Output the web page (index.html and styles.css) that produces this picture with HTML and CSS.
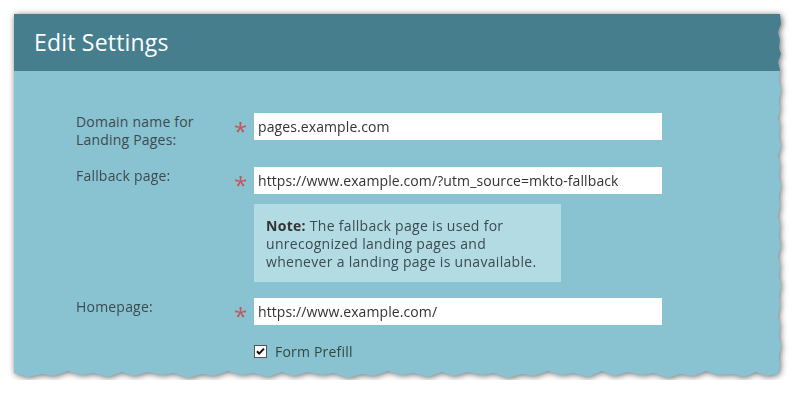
FILE: index.html
```html
<!DOCTYPE html>
<html lang="en">
<head>
    <meta charset="UTF-8">
    <title>Edit Settings</title>
    <link rel="stylesheet" href="styles.css">
</head>
<body>

    <div class="sheet">
        <div class="panel">
            <div class="panel-header">
                <h2>Edit Settings</h2>
            </div>

            <div class="panel-body">
                <div class="field">
                    <label class="field-label" for="domain">Domain name for<br>Landing Pages:</label>
                    <span class="required">*</span>
                    <input type="text" id="domain" class="field-input" value="pages.example.com">
                </div>

                <div class="field field-fallback">
                    <label class="field-label" for="fallback">Fallback page:</label>
                    <span class="required">*</span>
                    <input type="text" id="fallback" class="field-input" value="https://www.example.com/?utm_source=mkto-fallback">
                </div>

                <div class="note">
                    <strong>Note:</strong> The fallback page is used for<br>
                    unrecognized landing pages and<br>
                    whenever a landing page is unavailable.
                </div>

                <div class="field field-home">
                    <label class="field-label" for="homepage">Homepage:</label>
                    <span class="required">*</span>
                    <input type="text" id="homepage" class="field-input" value="https://www.example.com/">
                </div>

                <div class="check-row">
                    <span class="checkbox">
                        <svg width="13" height="13" viewBox="0 0 13 13">
                            <rect x="0.5" y="0.5" width="12" height="12" fill="#fff" stroke="#555"/>
                            <path d="M3 6.2 L5.2 8.6 L10 3.6" fill="none" stroke="#111" stroke-width="2"/>
                        </svg>
                    </span>
                    <span class="check-label">Form Prefill</span>
                </div>
            </div>
        </div>
    </div>

</body>
</html>
```

FILE: styles.css
```css
body {
    font-family: "Open Sans", "Liberation Sans", Arial, sans-serif;
    background-color: #fff;
    margin: 0;
    padding: 14px 0 0 14px;
}
.sheet {
    width: 770px;
    filter: drop-shadow(1px 1px 3px rgba(0,0,0,0.6));
}
.panel {
    height: 366px;
    background-color: #89c2d1;
    clip-path: polygon(0 0, 766px 0, 767px 10px, 764px 18px, 766px 26px, 765px 34px, 767px 40px, 764px 48px, 766px 56px, 765px 66px, 767px 76px, 765px 86px, 766px 96px, 764px 104px, 766px 112px, 765px 122px, 767px 132px, 764px 142px, 766px 152px, 765px 162px, 767px 172px, 765px 182px, 766px 192px, 764px 202px, 766px 212px, 765px 222px, 767px 232px, 764px 242px, 766px 252px, 765px 262px, 767px 272px, 765px 282px, 766px 292px, 764px 302px, 766px 312px, 765px 322px, 767px 332px, 765px 342px, 766px 352px, 764px 360px,
        752px 362px, 742px 358px, 730px 363px, 718px 360px, 704px 361px, 692px 357px, 680px 362px, 666px 360px, 654px 364px, 640px 359px, 628px 361px, 614px 358px,
        600px 362px, 588px 357px, 574px 363px, 560px 359px, 548px 361px, 534px 357px, 520px 362px, 508px 360px, 494px 364px, 480px 359px, 468px 361px, 454px 358px,
        440px 362px, 428px 358px, 414px 363px, 400px 359px, 388px 361px, 374px 357px, 360px 362px, 348px 360px, 334px 364px, 320px 359px, 308px 361px, 294px 358px,
        280px 362px, 268px 358px, 254px 363px, 240px 359px, 228px 361px, 214px 357px, 200px 362px, 188px 360px, 174px 364px, 160px 359px, 148px 361px, 134px 358px,
        120px 362px, 108px 358px, 94px 363px, 80px 359px, 68px 361px, 54px 357px, 40px 362px, 28px 360px, 14px 363px, 0 359px);
}
.panel-header {
    height: 57px;
    background-color: #467e8e;
    display: flex;
    align-items: center;
    padding-left: 20px;
}
.panel-header h2 {
    margin: 0 0 1px;
    font-size: 23px;
    font-weight: normal;
    letter-spacing: 0.2px;
    color: #fff;
}
.panel-body {
    padding: 42px 0 0 62px;
}
.field {
    display: flex;
    align-items: flex-start;
}
.field-fallback {
    margin-top: 18px;
}
.field-home {
    margin-top: 16px;
}
.field-label {
    width: 158px;
    font-size: 14px;
    line-height: 18px;
    letter-spacing: 0.2px;
    color: #3c4b50;
}
.required {
    width: 20px;
    font-size: 24px;
    line-height: 27px;
    height: 27px;
    color: #c4565b;
    padding-top: 4px;
    box-sizing: border-box;
}
.field-input {
    width: 408px;
    height: 27px;
    box-sizing: border-box;
    border: none;
    padding: 0 4px;
    font-family: inherit;
    font-size: 14px;
    letter-spacing: 0.1px;
    color: #333;
    background-color: #fff;
}
.note {
    width: 307px;
    box-sizing: border-box;
    margin: 10px 0 0 178px;
    padding: 13px 12px 11px;
    background-color: #b3dbe3;
    font-size: 14px;
    line-height: 18px;
    letter-spacing: 0.3px;
    color: #3c4b50;
}
.note strong {
    color: #333;
}
.check-row {
    display: flex;
    align-items: center;
    margin: 17px 0 0 178px;
    height: 18px;
}
.checkbox {
    display: flex;
    width: 13px;
    height: 13px;
}
.check-label {
    margin-left: 8px;
    font-size: 14px;
    letter-spacing: 0.2px;
    color: #2e4a3e;
}
```
